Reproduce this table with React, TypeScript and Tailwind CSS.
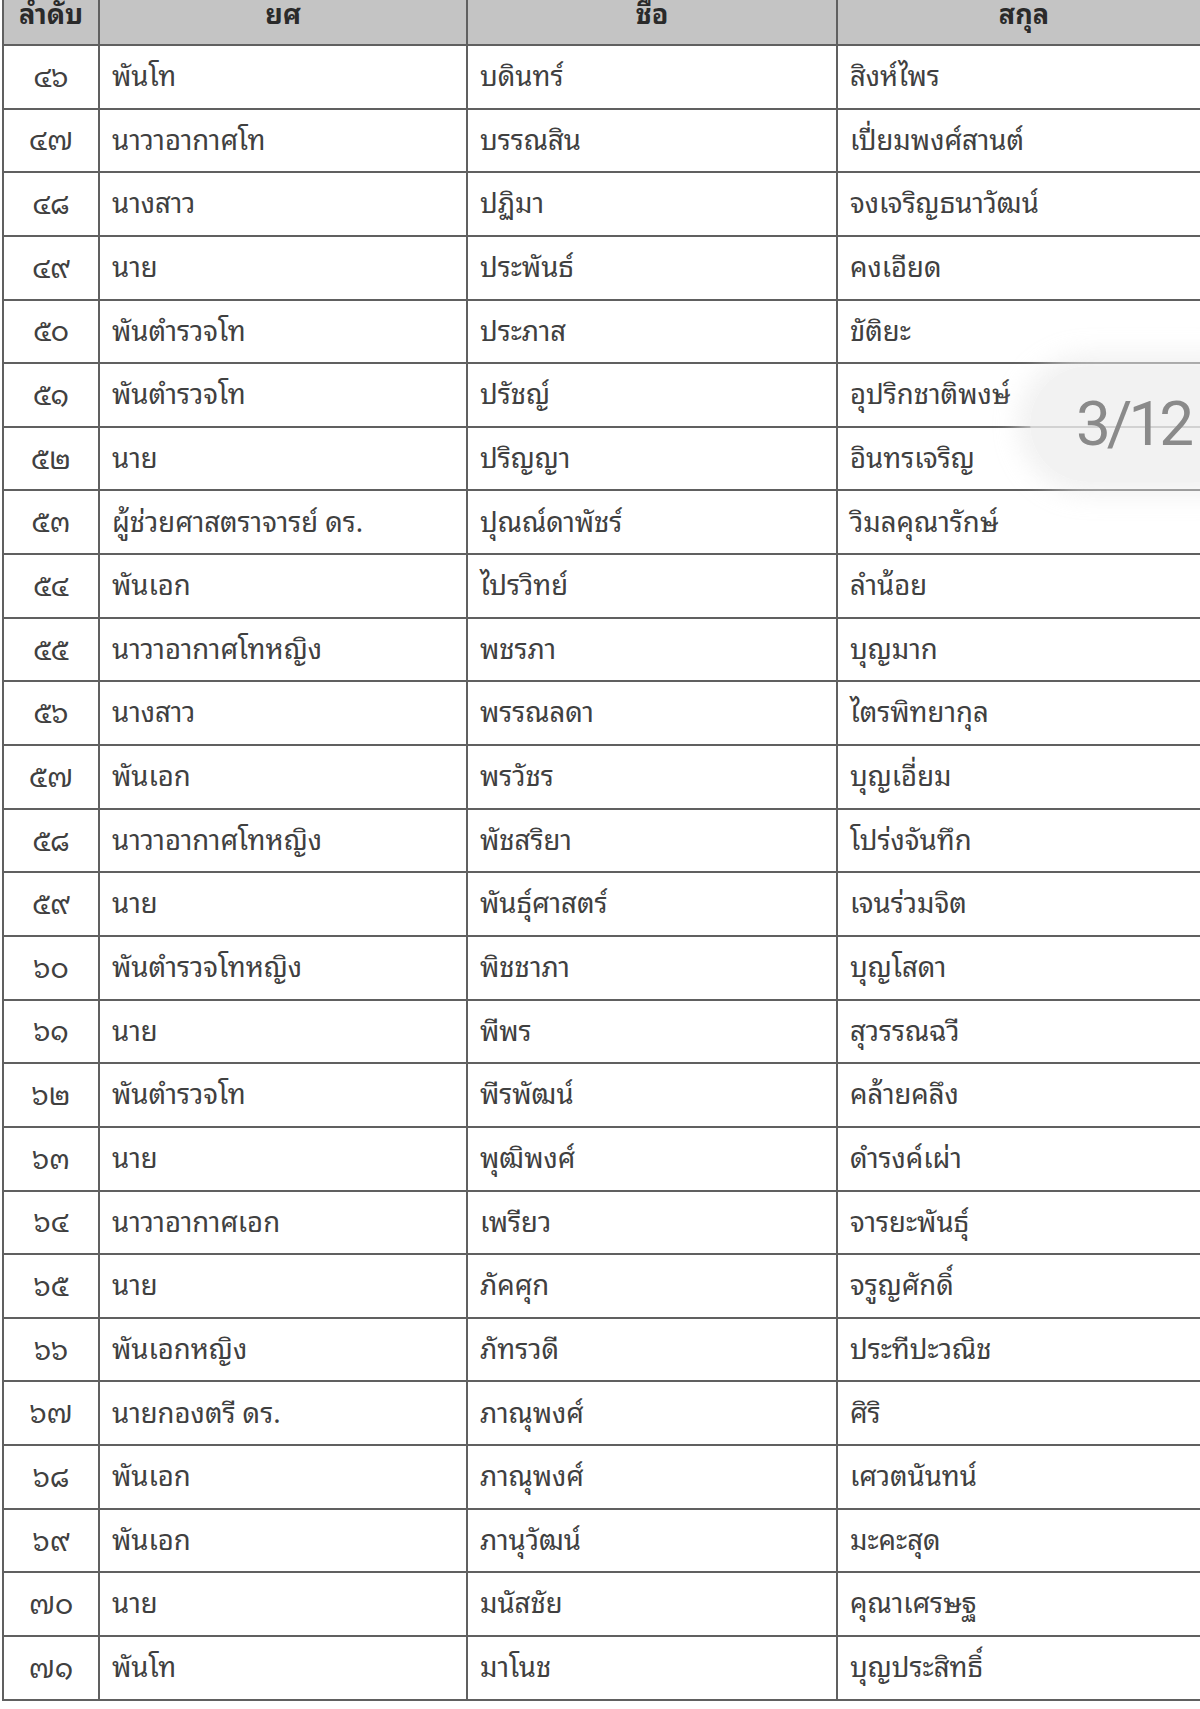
import React from "react";

const th = (n: number) =>
  String(n)
    .split("")
    .map((d) => "๐๑๒๓๔๕๖๗๘๙"[Number(d)])
    .join("");

const rows: [string, string, string][] = [
  ["พันโท", "บดินทร์", "สิงห์ไพร"],
  ["นาวาอากาศโท", "บรรณสิน", "เปี่ยมพงศ์สานต์"],
  ["นางสาว", "ปฏิมา", "จงเจริญธนาวัฒน์"],
  ["นาย", "ประพันธ์", "คงเอียด"],
  ["พันตำรวจโท", "ประภาส", "ขัติยะ"],
  ["พันตำรวจโท", "ปรัชญ์", "อุปริกชาติพงษ์"],
  ["นาย", "ปริญญา", "อินทรเจริญ"],
  ["ผู้ช่วยศาสตราจารย์ ดร.", "ปุณณ์ดาพัชร์", "วิมลคุณารักษ์"],
  ["พันเอก", "ไปรวิทย์", "ลำน้อย"],
  ["นาวาอากาศโทหญิง", "พชรภา", "บุญมาก"],
  ["นางสาว", "พรรณลดา", "ไตรพิทยากุล"],
  ["พันเอก", "พรวัชร", "บุญเอี่ยม"],
  ["นาวาอากาศโทหญิง", "พัชสริยา", "โปร่งจันทึก"],
  ["นาย", "พันธุ์ศาสตร์", "เจนร่วมจิต"],
  ["พันตำรวจโทหญิง", "พิชชาภา", "บุญโสดา"],
  ["นาย", "พีพร", "สุวรรณฉวี"],
  ["พันตำรวจโท", "พีรพัฒน์", "คล้ายคลึง"],
  ["นาย", "พุฒิพงศ์", "ดำรงค์เผ่า"],
  ["นาวาอากาศเอก", "เพรียว", "จารยะพันธุ์"],
  ["นาย", "ภัคศุก", "จรูญศักดิ์"],
  ["พันเอกหญิง", "ภัทรวดี", "ประทีปะวณิช"],
  ["นายกองตรี ดร.", "ภาณุพงศ์", "ศิริ"],
  ["พันเอก", "ภาณุพงศ์", "เศวตนันทน์"],
  ["พันเอก", "ภานุวัฒน์", "มะคะสุด"],
  ["นาย", "มนัสชัย", "คุณาเศรษฐ"],
  ["พันโท", "มาโนช", "บุญประสิทธิ์"],
];

export default function App() {
  return (
    <div
      className="relative w-[1200px] h-[1709px] overflow-hidden bg-white"
      style={{
        fontFamily:
          "Tahoma, 'Noto Sans Thai Looped', 'Noto Sans Thai', Loma, Garuda, Waree, 'Noto Sans', sans-serif",
      }}
    >
      <table className="table-fixed border-collapse ml-[2px] -mt-[14px] w-[1210px] text-[#404040]">
        <colgroup>
          <col className="w-[96px]" />
          <col className="w-[368px]" />
          <col className="w-[370px]" />
          <col />
        </colgroup>
        <thead>
          <tr className="h-[58px] bg-[#c4c4c4]">
            {["ลำดับ", "ยศ", "ชื่อ", "สกุล"].map((h) => (
              <th
                key={h}
                className="border-2 border-[#606060] text-center align-middle text-[27px] font-bold text-[#2a2a2a] leading-none pb-[10px]"
              >
                {h}
              </th>
            ))}
          </tr>
        </thead>
        <tbody>
          {rows.map((r, i) => (
            <tr key={i} className="h-[63.65px]">
              <td className="border-2 border-[#606060] text-center text-[28px] leading-none pb-[4px]">
                {th(46 + i)}
              </td>
              <td className="border-2 border-[#606060] pl-[12px] text-[27.5px] leading-none pb-[4px]">
                {r[0]}
              </td>
              <td className="border-2 border-[#606060] pl-[12px] text-[27.5px] leading-none pb-[4px]">
                {r[1]}
              </td>
              <td className="border-2 border-[#606060] pl-[12px] text-[27.5px] leading-none pb-[4px]">
                {r[2]}
              </td>
            </tr>
          ))}
        </tbody>
      </table>
      <div className="absolute left-[1030px] top-[366px] h-[116px] w-[240px] rounded-full bg-[#efefef]/80 shadow-[0_0_24px_12px_rgba(235,235,235,0.7)] flex items-center pl-[46px]">
        <span
          className="text-[62px] tracking-[-4px] text-[#8a8a8a] leading-none"
          style={{ fontFamily: "Roboto, sans-serif" }}
        >
          3/12
        </span>
      </div>
    </div>
  );
}
